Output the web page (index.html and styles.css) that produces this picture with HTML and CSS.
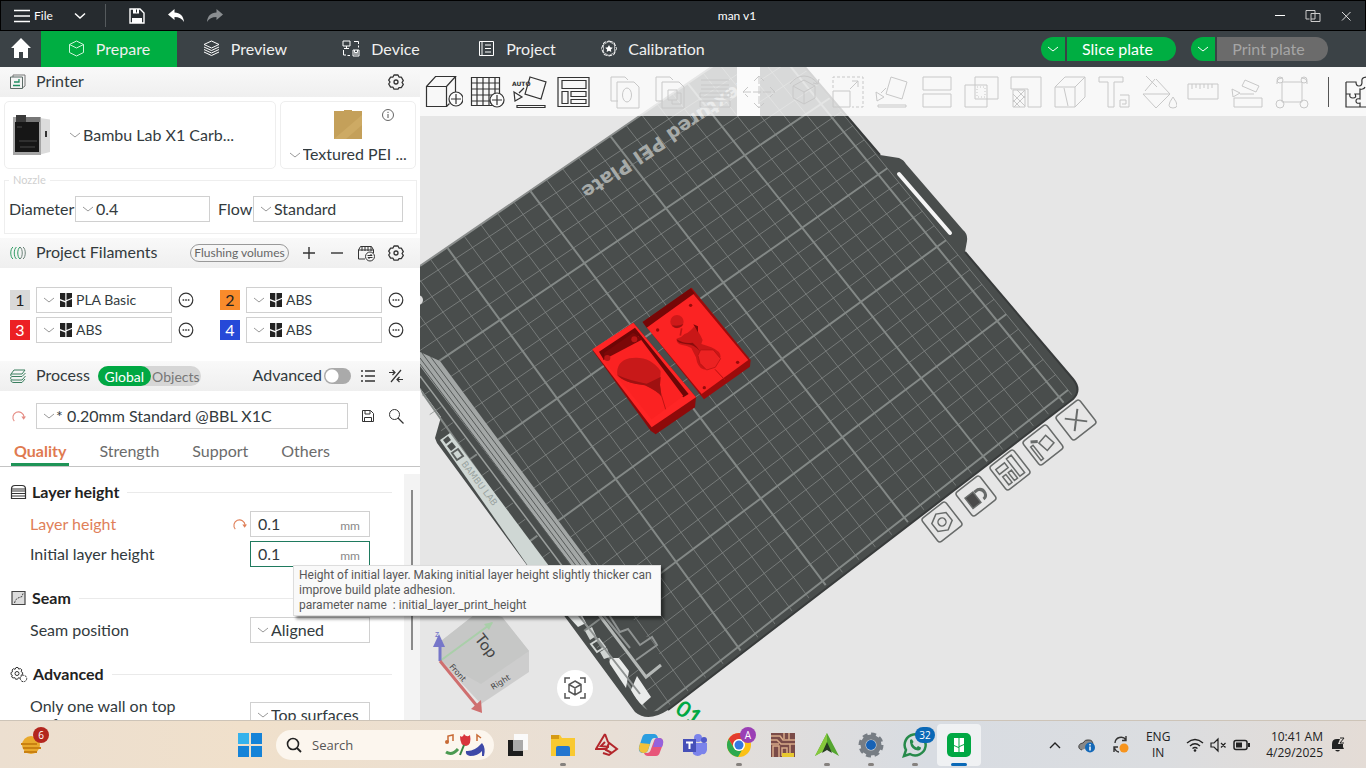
FILE: index.html
```html
<!DOCTYPE html>
<html lang="en">
  <head>
    <meta charset="UTF-8" />
    <meta name="viewport" content="width=device-width, initial-scale=1" />
    <title>man v1</title>
    <link rel="stylesheet" href="styles.css">
  </head>
  <body>
    <svg class="sprite" aria-hidden="true">
      <symbol id="chevron" viewBox="0 0 12 8"><path d="M1 2l5 4 5-4" fill="none" stroke="currentColor" /></symbol>
      <symbol id="more" viewBox="0 0 16 16"><circle cx="8" cy="8" r="6.8" fill="none" stroke="#333" stroke-width="1.2" /><path d="M4.6 8h1.6M7.2 8h1.6M9.8 8h1.6" stroke="#333" stroke-width="1.5" /></symbol>
      <symbol id="gear" viewBox="0 0 16 16"><path d="M6 1h4l1 2 2.400.2 1.900 3.400-1.300 1.900 1.300 1.900-1.900 3.100-2.400.1L10 15.200H6l-1-2-2.400-.1L.7 10 2 8 .7 6.100 2.600 3.100 5 3z" fill="none" stroke="#333" stroke-width="1.300" stroke-linejoin="round" /><circle cx="8" cy="8" r="2" fill="none" stroke="#333" stroke-width="1.300" /></symbol>
      <symbol id="brand" viewBox="0 0 12 14"><path d="M0 0h5.300v8L0 6zM6.500 0H12v4.800L6.500 7zM0 7.500l5.300 2V14H0zM6.500 8.300L12 6v8H6.500z" fill="#222" /></symbol>
      <symbol id="reset" viewBox="0 0 16 16"><path d="M3.500 13A6 6 0 1 1 14 8.500" fill="none" stroke="currentColor" stroke-width="1.200" /><path d="M11 8h5l-2.500 3.500z" fill="currentColor" /></symbol>
    </svg>

    <div class="app">
      <header class="titlebar">
        <button class="file-btn">
          <svg width="18" height="16"><path d="M1 2.500h16M1 8h16M1 13.500h16" stroke="#fff" stroke-width="1.500" /></svg>
          File
        </button>
        <button class="title-btn drop" aria-label="File menu"><svg width="14" height="10"><path d="M2 2.500l5 4.500 5-4.500" fill="none" stroke="#fff" stroke-width="1.500" /></svg></button>
        <span class="divider"></span>
        <button class="title-btn" aria-label="Save"><svg width="16" height="16"><path d="M1 1h10l4 4v10H1z" fill="none" stroke="#fff" stroke-width="1.400" /><path d="M4 1h6v4.500H4zM3 10h10v5H3z" fill="#fff" /><path d="M7.500 1.500v3" stroke="#262b2f" /></svg></button>
        <button class="title-btn" aria-label="Undo"><svg width="18" height="16"><path d="M1 6.500L7.500 1v3.500C13 4.500 16.500 8 17 14c-2-3.500-5-5-9.500-5v3z" fill="#fff" /></svg></button>
        <button class="title-btn" aria-label="Redo"><svg width="18" height="16"><path d="M17 6.500L10.500 1v3.500C5 4.500 1.500 8 1 14c2-3.500 5-5 9.500-5v3z" fill="#8a8e91" /></svg></button>
        <h1>man v1</h1>
        <div class="window-btns">
          <button class="title-btn" aria-label="Minimize"><svg width="16" height="16"><path d="M3 7.500h10" stroke="#fff" /></svg></button>
          <button class="title-btn" aria-label="Restore"><svg width="16" height="16"><path d="M4.500 11H1V2.500h9v3M6 5.500h9v8H6zM6 11h4V5.500" fill="none" stroke="#ccc" /></svg></button>
          <button class="title-btn" aria-label="Close"><svg width="16" height="16"><path d="M4 4l8.500 8.500M12.500 4L4 12.500" stroke="#ddd" /></svg></button>
        </div>
      </header>

      <nav class="nav">
        <a class="home" href="#" aria-label="Home"><svg width="20" height="20"><path d="M10 0l10 10h-3v10h-5v-6H8v6H3V10H0z" fill="#fff" /></svg></a>
        <a class="nav-tab active" href="#">
          <svg width="17" height="17"><path d="M8.500 1l7 3.500v8l-7 3.500-7-3.500v-8zM1.500 4.500l7 3.500 7-3.500" fill="none" stroke="#cdf5da" /></svg>
          Prepare</a>
        <a class="nav-tab" href="#">
          <svg width="17" height="17"><path d="M8.500 1L16 4.500 8.500 8 1 4.500zM1 7l7.500 3.500L16 7M1 9.500L8.500 13 16 9.500M1 12l7.500 3.500L16 12" fill="none" stroke="#fff" /></svg>
          Preview</a>
        <a class="nav-tab" href="#">
          <svg width="18" height="17"><path d="M1 1h7v5H1zM4.500 6v2M2 8.500h5M11 10h6v6h-6zM12.500 10v2.500h3V10M12 14h4M12 1.500h4.500V4M16.500 5.500v2M1.500 10v5H4M5.500 15.500h2.500" fill="none" stroke="#fff" /></svg>
          Device</a>
        <a class="nav-tab" href="#">
          <svg width="17" height="17"><path d="M1.500 1.500h14v14h-14zM4 1v15M7 5h6M7 8.500h6M7 12h6" fill="none" stroke="#fff" /></svg>
          Project</a>
        <a class="nav-tab" href="#">
          <svg width="16" height="17"><path d="M8 1l5 1.500L15.500 8.500 13 14.500 8 16l-5-1.500L.5 8.500 3 2.500z" fill="none" stroke="#fff" stroke-dasharray="4 1" /><path d="M8 1.500L13.500 4.500v8L8 15.500l-5.500-3v-8z" fill="none" stroke="#fff" stroke-width=".6" /><path d="M8 5l1.200 2.300 2.600.4-1.900 1.800.4 2.600L8 10.800l-2.300 1.300.4-2.600-1.900-1.800 2.600-.4z" fill="#fff" /></svg>
          Calibration</a>
        <div class="actions">
          <button class="pill-drop" aria-label="Slice options"><svg width="12" height="8"><use href="#chevron" /></svg></button>
          <button class="pill">Slice plate</button>
          <button class="pill-drop" aria-label="Print options"><svg width="12" height="8"><use href="#chevron" /></svg></button>
          <button class="pill disabled" disabled>Print plate</button>
        </div>
      </nav>

      <main class="main">
        <aside class="sidebar">
          <div class="head">
            <svg width="18" height="18"><path d="M4 4V2h12v11l-2 1.500" fill="none" stroke="#777" /><path d="M1.500 4h12v11.500h-12z" fill="none" stroke="#5b6b66" /><path d="M4 12.500h7M5 9h5V6" fill="none" stroke="#1f8f61" stroke-width="1.300" /></svg>
            <h2>Printer</h2>
            <button class="icon-btn push" aria-label="Printer settings"><svg width="16" height="16"><use href="#gear" /></svg></button>
          </div>

          <div class="cards">
            <div class="card printer-card">
              <svg width="42" height="42">
                <path d="M28 4l10 1.500V38l-10 2.500z" fill="#dcdcdc" /><path d="M1 3h28v38H1z" fill="#a5a5a5" />
                <path d="M3 8h24v30H3z" fill="#161616" /><path d="M4 1h10v7H4z" fill="#3a3a3a" /><path d="M14 3h14v5H14z" fill="#777" />
                <path d="M5 13h5M7 27h18M8 33h15" stroke="#484848" /><path d="M34 17v6" stroke="#333" stroke-width="2" />
              </svg>
              <label class="picker"><svg width="12" height="8"><use href="#chevron" /></svg>
                <select aria-label="Printer"><option>Bambu Lab X1 Carb...</option></select></label>
            </div>
            <div class="card plate-card">
              <svg class="plate-img" width="28" height="29"><path d="M0 1h10V0h8v1h10v28H0z" fill="#c4a05a" /><path d="M0 29L28 5v10L12 29z" fill="#cdaa64" /></svg>
              <svg class="info" width="14" height="14"><circle cx="7" cy="7" r="5.500" fill="none" stroke="#666" /><path d="M7 6v4M7 3.800v1.200" stroke="#555" /></svg>
              <label class="picker"><svg width="12" height="8"><use href="#chevron" /></svg>
                <select aria-label="Plate type"><option>Textured PEI ...</option></select></label>
            </div>
          </div>

          <fieldset class="nozzle">
            <legend>Nozzle</legend>
            <label for="diameter">Diameter</label>
            <div class="select"><svg width="12" height="8"><use href="#chevron" /></svg><select id="diameter"><option>0.4</option></select></div>
            <label for="flow">Flow</label>
            <div class="select flow"><svg width="12" height="8"><use href="#chevron" /></svg><select id="flow"><option>Standard</option></select></div>
          </fieldset>

          <div class="head">
            <svg width="18" height="18"><path d="M4 3c-3 2-3 10 0 12M7.500 3c-3 2-3 10 0 12M11 3c-3 2-3 10 0 12" fill="none" stroke="#2f9c63" /><path d="M11 3c3 2 3 10 0 12M14 3c3 2 3 10 0 12" fill="none" stroke="#6b8379" /></svg>
            <h2>Project Filaments</h2>
            <button class="flush push">Flushing volumes</button>
            <button class="icon-btn" aria-label="Add filament"><svg width="16" height="16"><path d="M8 2v12M2 8h12" stroke="#333" stroke-width="1.400" /></svg></button>
            <button class="icon-btn" aria-label="Remove filament"><svg width="16" height="16"><path d="M2 8h12" stroke="#333" stroke-width="1.400" /></svg></button>
            <button class="icon-btn wide" aria-label="Sync filaments"><svg width="19" height="17"><path d="M1.500 5l2-3.500h11l2 3.500v3M1.500 5v9H8M1.500 5h15M5 2v4M8 2v4M11 2v4M14 2v4" fill="none" stroke="#333" /><circle cx="13" cy="11.500" r="4.500" fill="#f3f3f3" stroke="#333" /><path d="M10.500 10.500h4.500l-1.500-1.500M15.500 12.500H11l1.500 1.500" fill="none" stroke="#333" /></svg></button>
            <button class="icon-btn" aria-label="Filament settings"><svg width="16" height="16"><use href="#gear" /></svg></button>
          </div>

          <div class="filaments">
            <div class="filament"><span class="swatch gray">1</span>
              <div class="select"><svg width="12" height="8"><use href="#chevron" /></svg><svg width="12" height="14"><use href="#brand" /></svg><select aria-label="Filament 1"><option>PLA Basic</option></select></div>
              <button class="icon-btn" aria-label="More"><svg width="16" height="16"><use href="#more" /></svg></button></div>
            <div class="filament"><span class="swatch orange">2</span>
              <div class="select"><svg width="12" height="8"><use href="#chevron" /></svg><svg width="12" height="14"><use href="#brand" /></svg><select aria-label="Filament 2"><option>ABS</option></select></div>
              <button class="icon-btn" aria-label="More"><svg width="16" height="16"><use href="#more" /></svg></button></div>
            <div class="filament"><span class="swatch red">3</span>
              <div class="select"><svg width="12" height="8"><use href="#chevron" /></svg><svg width="12" height="14"><use href="#brand" /></svg><select aria-label="Filament 3"><option>ABS</option></select></div>
              <button class="icon-btn" aria-label="More"><svg width="16" height="16"><use href="#more" /></svg></button></div>
            <div class="filament"><span class="swatch blue">4</span>
              <div class="select"><svg width="12" height="8"><use href="#chevron" /></svg><svg width="12" height="14"><use href="#brand" /></svg><select aria-label="Filament 4"><option>ABS</option></select></div>
              <button class="icon-btn" aria-label="More"><svg width="16" height="16"><use href="#more" /></svg></button></div>
          </div>

          <div class="head">
            <svg width="18" height="18"><path d="M5 3h11l-3 4H2zM2 7c-1 1 0 3 2 2.500h9L16.500 6M2 10c-1 2 0 3 2 3h9l3.500-4M2 13c0 2 1 2.500 3 2.500h8l3-3.500" fill="none" stroke="#3a7f5f" /></svg>
            <h2>Process</h2>
            <div class="scope"><button class="on">Global</button><button>Objects</button></div>
            <label class="adv push">Advanced<input type="checkbox" class="toggle" /></label>
            <button class="icon-btn" aria-label="Parameter list"><svg width="16" height="16"><path d="M1 3h2M5 3h10M1 8h2M5 8h10M1 13h2M5 13h10" stroke="#333" stroke-width="1.400" /></svg></button>
            <button class="icon-btn" aria-label="Compare presets"><svg width="16" height="16"><path d="M13 2L3 14M1 4.500h6M4.500 2L7 4.500 4.500 7M15 11.500H9M11.500 9L9 11.500l2.500 2.500" fill="none" stroke="#333" stroke-width="1.200" /></svg></button>
          </div>

          <div class="preset">
            <button class="icon-btn reset-btn" aria-label="Reset preset"><svg width="15" height="15"><use href="#reset" /></svg></button>
            <div class="select"><svg width="12" height="8"><use href="#chevron" /></svg><select aria-label="Process preset"><option>* 0.20mm Standard @BBL X1C</option></select></div>
            <button class="icon-btn" aria-label="Save preset"><svg width="14" height="14"><path d="M1.500 1.500h8l3 3v8h-11zM4 1.500V5h5V1.500M3.500 12.500v-4h7v4" fill="none" stroke="#333" /></svg></button>
            <button class="icon-btn" aria-label="Search settings"><svg width="16" height="16"><circle cx="6.500" cy="6.500" r="5" fill="none" stroke="#333" /><path d="M10 10l5.500 5.500" stroke="#333" stroke-width="1.200" /></svg></button>
          </div>

          <div class="tabs">
            <button class="tab current">Quality</button>
            <button class="tab">Strength</button>
            <button class="tab">Support</button>
            <button class="tab">Others</button>
          </div>

          <div class="params">
            <div class="params-list">
              <section>
                <h3><svg width="17" height="16"><path d="M1.500 5C1.500 2.500 3 1.500 5 1.500h7c2 0 3.500 1 3.500 3.500v2h-14zM1.500 7v7.500h14V7M1 9.500h15M1 12h15M1 5h15" fill="none" stroke="#333" stroke-width="1.200" /></svg><span>Layer height</span></h3>
                <div class="param changed">
                  <label for="layer">Layer height</label>
                  <svg class="reset" width="15" height="15"><use href="#reset" /></svg>
                  <div class="number"><input type="text" id="layer" value="0.1" /><span>mm</span></div>
                </div>
                <div class="param">
                  <label for="initial">Initial layer height</label>
                  <div class="number focus"><input type="text" id="initial" value="0.1" /><span>mm</span></div>
                </div>
              </section>
              <section>
                <h3><svg width="17" height="16"><path d="M2 1.500h13v13H2z" fill="#ddd" stroke="#444" stroke-width="1.200" /><path d="M4.500 13l1-3 2.500-2 4-1.500 1-3" fill="none" stroke="#444" stroke-dasharray="2 1" /></svg><span>Seam</span></h3>
                <div class="param">
                  <label for="seam">Seam position</label>
                  <div class="select"><svg width="12" height="8"><use href="#chevron" /></svg><select id="seam"><option>Aligned</option></select></div>
                </div>
              </section>
              <section>
                <h3><svg width="18" height="17"><path d="M6 1.500h2l.7 1.600 1.800-.5 1.300 1.300-.7 1.700 1.500.9v2l-1.600.8.500 1.700-1.300 1.300-1.700-.6-.9 1.500H5.500l-.7-1.600-1.800.4L1.700 11l.6-1.800L1 8.500v-2l1.600-.8-.5-1.700 1.300-1.300 1.700.6z" fill="none" stroke="#333" /><circle cx="7" cy="7.500" r="2" fill="none" stroke="#333" /><circle cx="13.500" cy="12.500" r="3.200" fill="#fff" stroke="#333" stroke-dasharray="2 .7" /></svg><span>Advanced</span></h3>
                <div class="param tall">
                  <label for="wall">Only one wall on top surfaces</label>
                  <div class="select"><svg width="12" height="8"><use href="#chevron" /></svg><select id="wall"><option>Top surfaces</option></select></div>
                </div>
              </section>
            </div>
            <div class="scroll"><div class="thumb"></div></div>
          </div>
        </aside>

        <div class="view">
          <svg class="scene" viewBox="420 67 946 653" preserveAspectRatio="xMinYMin slice">
            <defs>
              <clipPath id="sheet"><path d="M420 267L638 118 722 61H798L879 156 964 253 1071 380Q1079 389 1071 397L667 707Q652 716 642 706L437 440 420 388z" /></clipPath>
            </defs>
            <!-- plate body -->
            <path d="M420 266L638 117 722 60H799L880 155 899 158Q904 160 906 164L963 230Q968 234 967 241L965 252 1073 379Q1082 390 1073 399L668 710Q648 723 635 712L437 443 435 438 441 417 420 388z" fill="#494d4c" />
            <path d="M420 266L638 117 722 60" fill="none" stroke="#8a8d8c" stroke-width="2" />
            <path d="M799 60L880 155M965 252L1073 379Q1082 390 1073 399L668 710" fill="none" stroke="#383b3b" stroke-width="2" />
            <path d="M899 174L950 233" stroke="#f5f5f5" stroke-width="4" stroke-linecap="round" />
            <g clip-path="url(#sheet)">
              <path id="gridThin" class="grid-thin" />
              <path id="gridBold" class="grid-bold" />
            </g>
            <text class="plate-text" transform="translate(743 79) rotate(146)">Textured PEI Plate</text>

            <!-- left rim -->
            <path d="M420 352L440 361 592 566 640 628 664 660 646 680 560 566 420 378z" fill="#494d4c" />
            <path d="M420 352L440 361 592 566 572 566 420 366z" fill="#a3a7a6" />
            <path d="M420 358L577 567M422 353L582 567M430 356L588 567M420 364L572 567" stroke="#565a59" fill="none" />
            <path d="M420 376L563 567" stroke="#9a9e9c" stroke-width="1.500" fill="none" />
            <path d="M440 440L450 433 549 566 528 566z" fill="#cfd7d4" />
            <path d="M443 440l5-4 3 4-5 4zM447 446l5-4 4 5-5 4z" fill="#4b4f4e" />
            <path d="M452 453l6-4 5 7-6 4z" fill="none" stroke="#5c605f" stroke-width="2" />
            <text class="rim-text" transform="translate(461 464) rotate(53)">BAMBU LAB</text>
            <path d="M567 615h15l4 8-8 4z" fill="#e4e7e6" />
            <path d="M585 631l7-4 4 9-6 4zM600 652l7-4 3 9-6 2z" fill="#d0d4d2" />
            <path d="M591 644l8-5 6 8-8 5z" fill="none" stroke="#d0d4d2" stroke-width="2" />
            <path d="M610 664q-2-5 3-6l6 0q4 5 10 13l-3 17zM631 690l6-14 14 21-9 8q-5-4-11-15z" fill="#e9ebea" />
            <path d="M588 600L646 677 661 665" fill="none" stroke="#b4b8b6" stroke-width="3" />
            <path d="M596 606L630 648M606 610L620 632 628 629 640 645 652 637 657 645 636 660M573 608L640 694" fill="none" stroke="#8f9392" stroke-width="2" />
            <circle cx="418" cy="300" r="5" fill="#ddd" />
            <text class="plate-no" transform="translate(674 712) rotate(35)">01</text>

            <!-- models -->
            <g transform="translate(420 260) scale(.3333)">
              <path d="M668 186L815 83 992 300 990 320 852 418 842 406z" fill="#9c0b0b" />
              <path d="M680 202L818 100 985 300 845 402z" fill="#fb2323" />
              <path d="M668 186L812 85 824 100 680 203z" fill="#760707" />
              <path d="M785 205l-4 22" stroke="#c21515" stroke-width="5" />
              <circle cx="771" cy="185" r="20" fill="#cf1919" />
              <path d="M756 196a20 20 0 0 0 34-4q-14 8-34 4z" fill="#9c1010" />
              <path d="M770 236q16-4 24-14 16-6 28-22 14 12 26 40l-4 12q14 4 30 10 28 12 28 28l-18 24q-14 18-34 14-18-6-22-36l-14-28q-12-8-30-10-16-4-14-18z" fill="#c91717" />
              <path d="M842 270l38 0 22 26-16 26-26 8-20-20-6-24z" fill="#ec2222" stroke="#b01010" stroke-width="2" />
              <path d="M820 193l14 6 0 18z" fill="#7d0808" /><path d="M770 238q20 14 48 10 12 10 22 26-18-22-44-22-24-2-26-14z" fill="#8c0c0c" />
              <g fill="#9a0a0a"><circle cx="812" cy="136" r="5" /><circle cx="713" cy="210" r="5" /><circle cx="953" cy="307" r="5" /><circle cx="853" cy="383" r="5" /></g>
              <path d="M885 328l30 32" stroke="#b80f0f" stroke-width="3" />
              <path d="M517 270L640 188 828 412 825 442 707 523 692 512z" fill="#8e0a0a" />
              <path d="M517 268L640 188 828 412 695 502z" fill="#ff2525" />
              <path d="M537 275L645 203 806 402 790 412 553 302z" fill="#6d0606" />
              <path d="M550 300L655 228 790 408 695 478z" fill="#fb2222" />
              <path d="M550 300L553 278 640 218 668 238z" fill="#7b0808" />
              <circle cx="562" cy="294" r="9" fill="#b81515" /><circle cx="643" cy="238" r="9" fill="#b81515" />
              <path d="M592 345q-4-40 36-50 60-10 94 38l-2 42 5 35q-10-15-50-34-65-8-83-31z" fill="#c81919" />
              <path d="M592 345q40 18 88 26l42-20-2 24 5 35q-10-15-50-34-65-8-83-31z" fill="#9f1111" />
              <path d="M725 408l12 40" fill="none" stroke="#c01414" stroke-width="3" />
            </g>

            <!-- plate actions -->
            <g class="plate-btns">
              <g transform="translate(942 522) rotate(-38)"><rect x="-15" y="-15" width="30" height="30" rx="3" /><path d="M-9-5L0-10 9-5V5L0 10-9 5z" /><circle r="4" /></g>
              <g transform="translate(976 496) rotate(-38)"><rect x="-15" y="-15" width="30" height="30" rx="3" /><path class="solid" d="M-10-5H0V8H-10z" /><path class="lock" d="M1-4H5Q10-2 9 3 8 7 4 7" /></g>
              <g transform="translate(1010 470) rotate(-38)"><rect x="-15" y="-15" width="30" height="30" rx="3" /><path d="M-11-9H0V-3H-11zM4-11H10V11H4zM-10 1H-6V11H-10zM-3 1H1V11H-3z" /></g>
              <g transform="translate(1043 445) rotate(-38)"><rect x="-15" y="-15" width="30" height="30" rx="3" /><path d="M-2-4L8-6 10 5 0 7zM-11-6V11H-8V-6z" /><path class="lock" d="M-8-10l6 4" /></g>
              <g transform="translate(1076 420) rotate(-38)"><rect x="-15" y="-15" width="30" height="30" rx="3" /><path class="cross" d="M-8-8L8 8M8-8L-8 8" /></g>
            </g>

            <!-- view cube -->
            <path d="M440 642L478 612 502 617 529 651 529 672 481 704 441 661z" fill="#cdcdcd" />
            <path d="M440 661L441 641 478 612 502 617 529 651 481 684z" fill="#c6c7c6" />
            <path d="M440 661L492 623" stroke="#a9cfa9" stroke-width="2" /><path d="M484 624l9-2-4 8z" fill="#a9cfa9" />
            <path d="M440 661V640" stroke="#7676c9" stroke-width="3" /><path d="M433 647l6-13 6 13z" fill="#7676c9" />
            <path d="M440 661L477 706" stroke="#cf6f6f" stroke-width="3" /><path d="M471 709l11 4-1-13z" fill="#cf6f6f" />
            <text class="cube-text" transform="translate(474 639) rotate(52)">Top</text>
            <text class="cube-small" transform="translate(449 667) rotate(48)">Front</text>
            <text class="cube-small" transform="translate(493 690) rotate(-32)">Right</text>
            <text class="axis-z" x="435" y="637">z</text>
          </svg>

          <div class="toolbar">
            <div class="tools">
              <button aria-label="Add model"><svg width="38" height="36"><path d="M1.500 12.500h20v20h-20zM1.500 12.500l9-10h20l-9 10M30.500 2.500V18M21.500 32.500l3-3" /><circle cx="31" cy="25" r="7" fill="#fcfcfc" /><path d="M31 20v10M26 25h10" /></svg></button>
              <button aria-label="Add plate"><svg width="38" height="36"><path d="M3.500 3.500h28v28h-28zM9 3v29M15 3v29M21 3v29M27 3v29M3 9h29M3 15h29M3 21h29M3 27h29" /><circle cx="29" cy="26" r="7" fill="#fcfcfc" /><path d="M29 21v10M24 26h10" /></svg></button>
              <button aria-label="Auto orient"><svg width="38" height="36"><path d="M19 3l16 5-5 17-16-5zM6 31.500h28v2H6zM3 18l8 5-7 4zM8 19l5-5" /><text x="1" y="12">AUTO</text></svg></button>
              <button aria-label="Arrange"><svg width="38" height="36"><path d="M4 3.500h31v29H4zM8 6.500h24v8H8zM8 17.500h6v12H8zM17 17.500h15v5H17zM17 25.500h15v4H17z" /></svg></button>
            </div>
            <div class="tools dim">
              <button aria-label="Split to objects"><svg width="36" height="36"><path d="M10 27H3V3h14l3 3M9 8h17l5 5v21H9z" /><ellipse cx="19" cy="21" rx="4.500" ry="7" /></svg></button>
              <button aria-label="Split to parts"><svg width="36" height="36"><path d="M10 27H3V3h14l3 3M9 8h17l5 5v21H9zM15 16h9v10h-9zM19 26v4h9V19h-4" /></svg></button>
              <button aria-label="Variable layer height"><svg width="36" height="36"><path d="M4 6h28M4 11h28M4 15h28M3 19h30v4H3zM3 27h30v6H3z" /></svg></button>
              <button class="lit" aria-label="Move"><svg width="36" height="36"><path d="M18 2v32M2 18h32M13 7l5-5 5 5M13 29l5 5 5-5M7 13l-5 5 5 5M29 13l5 5-5 5" stroke-dasharray="8 2" /></svg></button>
              <button aria-label="Rotate"><svg width="36" height="36"><path d="M7 12L18 6l11 6v12l-11 6-11-6zM7 12l11 6 11-6M18 18v12M4 10Q10 2 18 2t14 8l-5-1M32 10l1-5" /></svg></button>
              <button aria-label="Scale"><svg width="36" height="36"><path d="M3 17h17v16H3z" /><path d="M3 14V3h30v30H22" stroke-dasharray="3 2" /><path d="M20 15l8-8M22 7h6v6" /></svg></button>
              <button aria-label="Lay on face"><svg width="36" height="36"><path d="M17 3l16 5-5 17-16-5zM4 31h28v2H4zM2 18l8 5-7 4zM7 19l5-5" /></svg></button>
              <button aria-label="Cut"><svg width="36" height="36"><path d="M4 3h28v13H4zM4 20h28v13H4z" /></svg></button>
              <button aria-label="Mesh boolean"><svg width="36" height="36"><path d="M12 3h23v22H12zM2 11h22v22H2z" /><path d="M14 13h8v10h-8z" stroke-dasharray="1 2" /></svg></button>
              <button aria-label="Support painting"><svg width="36" height="36"><path d="M3 3h30v30H20V15H3z" /><path d="M5 16h12v17H5zM5 20l12 12M5 26l7 7M9 16l8 8M17 16L5 28M17 22L6 33" /></svg></button>
              <button aria-label="Seam painting"><svg width="36" height="36"><path d="M3 13h20v20H3zM3 13L13 3h20L23 13M33 3v20L23 33M12 14l4 18" /></svg></button>
              <button aria-label="Text"><svg width="36" height="36"><path d="M3 3h24v5h-9v25h-6V8H3z" /><path d="M24 21h9v12h-9v-7h6v4h-4" /></svg></button>
              <button aria-label="Color painting"><svg width="36" height="36"><path d="M15 5l14 15-14 14L2 20h26M14 5L4 17M5 2l11 11M32 23q-8 11 0 11t0-11z" /></svg></button>
              <button aria-label="Measure"><svg width="36" height="36"><path d="M3 10h30v15H3zM7 10v5M11 10v4M15 10v5M19 10v4M23 10v5M27 10v4" /></svg></button>
              <button aria-label="Assembly"><svg width="36" height="36"><path d="M5 24h28v9H5zM16 6l14 6-3 6-14-6zM3 15l8 4-7 4zM11 20h14" /></svg></button>
              <button aria-label="Assembly view"><svg width="36" height="36"><path d="M8 8h20v20H8zM3 10q-1-6 6-6M33 10q1-6-6-6" /><circle cx="6" cy="30" r="4" /><circle cx="30" cy="30" r="4" /><circle cx="6" cy="6" r="3" /><circle cx="30" cy="6" r="3" /></svg></button>
            </div>
            <span class="sep"></span>
            <button class="puzzle" aria-label="Assemble"><svg width="36" height="36"><path d="M3 8h10q0 4 3 4t3-4q-1-5 5-5M3 20h4q-1 4 3 4t2-4h5v-5q4 1 5-2M17 20v5q-4-1-4 2t4 2v4H3V8M17 33h8" /></svg></button>
          </div>
          <button class="fit" aria-label="Fit view"><svg width="24" height="24"><path d="M2 7V2h5M17 2h5v5M22 17v5h-5M7 22H2v-5" /><path d="M12 5l6 3.500v7L12 19l-6-3.500v-7zM6 8.500l6 3.500 6-3.500M12 12v7" /></svg></button>
        </div>
        <div class="tooltip" role="tooltip">Height of initial layer. Making initial layer height slightly thicker can improve build plate adhesion.<br>parameter name &nbsp;: initial_layer_print_height</div>
      </main>

      <footer class="taskbar">
        <button class="task weather" aria-label="Widgets">
          <svg width="26" height="26"><circle cx="12" cy="13" r="9" fill="#e9a92c" /><path d="M2 12h16M4 16h18M5 20h13" stroke="#c98112" stroke-width="2" /></svg>
          <span class="badge red">6</span>
        </button>
        <button class="task" aria-label="Start"><svg width="24" height="24"><path d="M0 0h11v11H0zM13 0h11v11H13zM0 13h11v11H0zM13 13h11v11H13z" fill="#1583d8" /><path d="M0 0h11v11H0z" fill="#35b2ec" /></svg></button>
        <label class="search">
          <svg width="16" height="16"><circle cx="7" cy="7" r="5.500" fill="none" stroke="#222" stroke-width="1.600" /><path d="M11 11l4 4" stroke="#222" stroke-width="1.800" /></svg>
          <input type="search" placeholder="Search" aria-label="Search" />
          <svg width="42" height="24"><path d="M4 9V3l5-1v6" fill="none" stroke="#c76a35" stroke-width="1.500" /><circle cx="3" cy="9" r="2" fill="#c76a35" /><path d="M2 19q6 4 12-3" fill="none" stroke="#4b9a51" stroke-width="3" /><path d="M16 3q3 2 4-2 3 4 6 1 2 10-4 11-6 0-6-10z" fill="#d8343c" /><path d="M20 12l-4 10" stroke="#368241" stroke-width="2" /><path d="M38 10q4 5 2 13h-2v-5q-4 5-12 5-5-1-4-5 8 1 16-8z" fill="#3e49a8" /><path d="M33 8V2l4 3" fill="none" stroke="#c76a35" stroke-width="1.500" /></svg>
        </label>
        <div class="tasks">
          <button class="task" aria-label="Task view"><svg width="24" height="24"><path d="M7 1h14v16H7z" fill="#fafafa" /><path d="M1 7h5v11h10v5H1z" fill="#1d1d1d" /><path d="M6 7h10v11H6z" fill="#aaa" /></svg></button>
          <button class="task running" aria-label="File Explorer"><svg width="26" height="24"><path d="M1 2h9l2 3h13v18H1z" fill="#f9c931" /><path d="M1 2h8v4H1z" fill="#d69a13" /><path d="M6 15q0-2 2-2h10q2 0 2 2v8H6z" fill="#2476cf" /></svg></button>
          <button class="task" aria-label="CAD"><svg width="24" height="24"><path d="M10 1L1 16h11M10 1l3 8M10 9l-4 4 8 1M13 9l9 7-8 6-6-2M14 10l-3 7 6 3" fill="none" stroke="#b3262b" stroke-width="2" /></svg></button>
          <button class="task" aria-label="Copilot"><svg width="26" height="24"><path d="M8 1h8q3 0 4 4h-4q-2 0-3 3l-3 9q-1 3-4 3H4Q0 19 1 14L4 5Q5 1 8 1z" fill="#2b9ee0" /><path d="M2 10L1 15q0 5 5 5 3 0 4-3l2-6z" fill="#f2c13b" /><path d="M18 23h-8q-3 0-4-3h3q3 0 4-4l3-8q1-3 4-3h2q4 1 3 6l-3 8q-1 4-4 4z" fill="#e8567a" /><path d="M17 6q1-1 3-1h2q4 1 3 6l-1 3h-9z" fill="#9562dc" /></svg></button>
          <button class="task" aria-label="Teams"><svg width="26" height="24"><circle cx="16" cy="5" r="4" fill="#7b83eb" /><circle cx="22" cy="7" r="3" fill="#5059c9" /><path d="M10 10h15v7q-1 5-5 4-4 4-9 0z" fill="#7b83eb" /><path d="M1 6h13v13H1z" fill="#4650b8" /><path d="M4 9.500h7M7.500 9.500V16" stroke="#fff" stroke-width="2" /></svg></button>
          <button class="task running" aria-label="Chrome"><svg width="26" height="26"><circle cx="13" cy="13" r="12" fill="#fbc116" /><path d="M2.600 7A12 12 0 0 1 23.400 7H13a6 6 0 0 0-5.500 8z" fill="#e33b2e" /><path d="M2.600 7L8 16a6 6 0 0 0 8 2l-4 7A12 12 0 0 1 2.600 7z" fill="#2da94f" /><circle cx="13" cy="13" r="6" fill="#fff" /><circle cx="13" cy="13" r="4.500" fill="#3478e0" /></svg><span class="badge purple">A</span></button>
          <button class="task" aria-label="Circuit"><svg width="26" height="26"><path d="M1 1h24v24H1z" fill="#7a4b48" /><path d="M1 4h9l3 4h12M1 8h6l4 4h14M3 25V14h6v11M12 24v-8h5v8M20 25V12M1 12h8M14 1v6M19 1v7" fill="none" stroke="#d8aa88" stroke-width="1.500" /><path d="M12 21h12v4H12z" fill="#e7c830" /></svg></button>
          <button class="task running" aria-label="Slicer"><svg width="26" height="26"><path d="M13 1l12 23-12-7-12 7z" fill="#55a630" /><path d="M13 1v16L1 24z" fill="#86c93c" /><path d="M13 10l5 11-5-3-5 3z" fill="#263b22" /></svg></button>
          <button class="task running" aria-label="Settings"><svg width="26" height="26"><circle cx="13" cy="13" r="8" fill="none" stroke="#777d84" stroke-width="5" /><circle cx="13" cy="13" r="11" fill="none" stroke="#777d84" stroke-width="3" stroke-dasharray="5 3.600" /><circle cx="13" cy="13" r="5" fill="#1762b5" /></svg></button>
          <button class="task running" aria-label="WhatsApp"><svg width="26" height="26"><path d="M2 24l2-6A10.500 10.500 0 1 1 8 22z" fill="none" stroke="#278a4b" stroke-width="2.500" /><path d="M8 8q2-2 3 1l.5 1-1 1.500q1.500 3 4 4l1.500-1.500 3 1.500q0 3-3 3-7-1-8-8z" fill="#278a4b" /></svg><span class="badge sky">32</span></button>
          <button class="task open" aria-label="Bambu Studio"><svg width="24" height="24"><rect width="24" height="24" rx="5" fill="#00a843" /><path d="M7 5h4.500v9L7 12zM12.500 5H17v6l-4.500 2zM7 13l4.500 2v4H7zM12.500 14l4.500-2v7h-4.500z" fill="#fff" /></svg></button>
        </div>
        <div class="tray">
          <button aria-label="Hidden icons"><svg width="14" height="12"><path d="M2 9l5-5 5 5" fill="none" stroke="#222" stroke-width="1.400" /></svg></button>
          <button aria-label="OneDrive"><svg width="18" height="16"><path d="M4 13q-4-1-3-4.500Q2 6 5 6q2-4 6-3 4 0 4 5" fill="#888" stroke="#444" /><circle cx="12" cy="10.500" r="5" fill="#1469b8" /><path d="M12 9.500v4M12 7v1.500" stroke="#fff" stroke-width="1.500" /></svg></button>
          <button aria-label="Updates"><svg width="18" height="18"><path d="M3 7a6 6 0 0 1 11-3M14 0v4.500h-4M2 16v-5h4M2 11q2 5 5 5" fill="none" stroke="#333" stroke-width="1.400" /><circle cx="12" cy="12" r="4.500" fill="#f7941d" /></svg></button>
          <button class="lang">ENG<br>IN</button>
          <button aria-label="Network"><svg width="18" height="16"><path d="M1 6q8-7 16 0M4 9q5-4.500 10 0M6.500 11.500q2.500-2 5 0" fill="none" stroke="#222" stroke-width="1.400" /><circle cx="9" cy="13.500" r="1.300" fill="#222" /></svg></button>
          <button aria-label="Volume"><svg width="17" height="16"><path d="M1 6h3l4-4v12L4 10H1zM11 6l4.500 4.500M15.500 6L11 10.500" fill="none" stroke="#222" stroke-width="1.200" /></svg></button>
          <button aria-label="Battery"><svg width="18" height="12"><rect x="1" y="1.500" width="13" height="9" rx="2" fill="none" stroke="#222" stroke-width="1.500" /><path d="M3 3.500h6v5H3z" fill="#222" /><path d="M16 4v4" stroke="#222" stroke-width="2" /></svg></button>
          <button class="clock">10:41 AM<br>4/29/2025</button>
          <button aria-label="Notifications"><svg width="16" height="16"><path d="M2 12V7q0-5 5-5h3l-2 5h5v3l1 2zM5 13h5q-2 3-5 0z" fill="#222" /><path d="M10 1h4l-4 5h4" fill="none" stroke="#222" /></svg></button>
        </div>
      </footer>
    </div>
    <script src="scene.js"></script>
  </body>
</html>
```

FILE: styles.css
```css
* {
  box-sizing: border-box;
}
body {
  margin: 0;
  font-family: Lato, "Liberation Sans", sans-serif;
  font-size: 16px;
  color: #323a3d;
  overflow: hidden;
}
button,
input,
select {
  font: inherit;
  color: inherit;
  border: none;
  background: none;
  padding: 0;
  margin: 0;
}
button {
  cursor: pointer;
}
svg {
  flex: none;
  display: block;
}
.sprite {
  position: absolute;
  width: 0;
  height: 0;
}
.app {
  display: flex;
  flex-direction: column;
  height: 100vh;
}

/* title bar */
.titlebar {
  display: flex;
  align-items: center;
  height: 31px;
  padding: 0 3px 0 12px;
  background-color: #262b2f;
  border: 1px solid #000;
  color: #fff;
  position: relative;
}
.file-btn {
  display: flex;
  align-items: center;
  gap: 3px;
  font-size: 12px;
}
.title-btn {
  display: flex;
  align-items: center;
  justify-content: center;
  width: 39px;
  height: 28px;
}
.title-btn.drop {
  margin-left: 8px;
}
.divider {
  width: 1px;
  height: 23px;
  background-color: #555a5d;
  margin: 0 12px 0 5px;
}
.titlebar h1 {
  position: absolute;
  left: 108px;
  right: 0;
  text-align: center;
  margin: 0;
  font-size: 12px;
  font-weight: normal;
  pointer-events: none;
}
.window-btns {
  display: flex;
  margin-left: auto;
}
.window-btns .title-btn {
  width: 33px;
}

/* main navigation */
.nav {
  display: flex;
  height: 36px;
  background-color: #3b4246;
  color: #fff;
}
.nav a {
  display: flex;
  align-items: center;
  justify-content: center;
  gap: 11px;
  padding-bottom: 2px;
  color: #f0f0f0;
  text-decoration: none;
}
.home {
  width: 41px;
}
.nav-tab {
  width: 136px;
}
.nav-tab.active {
  background-color: #00ae42;
}
.actions {
  display: flex;
  align-items: center;
  margin-left: auto;
  padding-right: 38px;
}
.pill-drop,
.pill {
  height: 24px;
  background-color: #00ae42;
  color: #fff;
}
.pill-drop {
  display: flex;
  align-items: center;
  justify-content: center;
  width: 24px;
  border-radius: 12px 0 0 12px;
  margin-right: 2px;
}
.pill {
  width: 109px;
  padding: 0 8px 2px 0;
  border-radius: 0 12px 12px 0;
  margin-right: 15px;
}
.pill.disabled {
  width: 111px;
  margin-right: 0;
  background-color: #6b6b6b;
  color: #a5a5a5;
}

.main {
  display: flex;
  flex: 1;
  min-height: 0;
  position: relative;
}

/* sidebar */
.sidebar {
  display: flex;
  flex-direction: column;
  width: 420px;
  background-color: #fff;
  overflow: hidden;
}
.head {
  display: flex;
  align-items: center;
  flex: none;
  height: 30px;
  padding: 0 16px 0 9px;
  background: linear-gradient(#f9f9f9, #efefef);
}
.head h2 {
  margin: 0 0 0 9px;
  padding-bottom: 3px;
  font-size: 16px;
  font-weight: normal;
}
.push {
  margin-left: auto;
}
.icon-btn {
  display: flex;
  align-items: center;
  justify-content: center;
  flex: none;
  width: 16px;
}
.cards {
  display: flex;
  gap: 4px;
  padding: 4px;
}
.card {
  height: 68px;
  border: 1px solid #eee;
  border-radius: 5px;
  display: flex;
  align-items: center;
}
.printer-card {
  flex: 1;
  padding-left: 7px;
  gap: 15px;
}
.plate-card {
  position: relative;
  width: 136px;
  flex-direction: column;
  padding: 8px 8px 3px;
  justify-content: space-between;
}
.info {
  position: absolute;
  top: 6px;
  right: 20px;
}
.picker,
.select {
  display: flex;
  align-items: center;
  color: #333b3e;
}
.picker svg,
.select svg:first-child {
  color: #999;
}
.picker {
  gap: 2px;
}
select {
  appearance: none;
  flex: 1;
  min-width: 0;
  padding-bottom: 2px;
  outline: none;
}
.select {
  height: 26px;
  border: 1px solid #d0d0d0;
  padding-left: 6px;
  gap: 2px;
  background-color: #fff;
}
.nozzle {
  display: flex;
  align-items: center;
  height: 61px;
  margin: 0 4px 4px;
  padding: 9px 13px 0 4px;
  border: 1px solid #eee;
}
.nozzle legend {
  font-size: 11px;
  line-height: 14px;
  color: #d0d0d0;
  padding: 0 4px;
}
.nozzle label {
  width: 66px;
  padding-bottom: 2px;
}
.nozzle label[for="flow"] {
  width: 43px;
  padding-left: 8px;
}
.nozzle .select {
  width: 135px;
}
.nozzle .flow {
  width: 150px;
}
.flush {
  width: 99px;
  height: 18px;
  border: 1px solid #999;
  border-radius: 9px;
  font-size: 12px;
  line-height: 14px;
  color: #666;
  margin-right: 12px;
}
.flush ~ .icon-btn {
  margin-left: 12px;
}
.flush + .icon-btn {
  margin-left: 0;
}
.flush ~ .icon-btn.wide {
  width: 19px;
}
.filaments {
  display: grid;
  grid-template-columns: 1fr 1fr;
  row-gap: 4px;
  padding: 19px 0 18px;
}
.filament {
  display: flex;
  align-items: center;
  padding-left: 10px;
}
.filament .select {
  width: 136px;
  margin: 0 6px;
  font-size: 14px;
}
.filament .select svg + svg {
  margin: 0 2px 0 3px;
}
.swatch {
  width: 20px;
  height: 20px;
  line-height: 19px;
  text-align: center;
  color: #222;
}
.swatch.gray {
  background-color: #d9d9d9;
}
.swatch.orange {
  background-color: #f98b2b;
}
.swatch.red {
  background-color: #ec2024;
  color: #fff;
}
.swatch.blue {
  background-color: #2649d8;
  color: #fff;
}
.scope {
  display: flex;
  height: 20px;
  margin-left: 8px;
  border-radius: 10px;
  background-color: #d6d6d6;
  font-size: 14px;
  line-height: 19px;
}
.scope button {
  width: 50px;
  color: #777;
}
.scope .on {
  width: 53px;
  border-radius: 10px;
  background-color: #00a843;
  color: #fff;
}
.adv {
  display: flex;
  align-items: center;
  gap: 2px;
  line-height: 16px;
  padding-bottom: 2px;
}
.adv ~ .icon-btn {
  margin-left: 12px;
}
.adv + .icon-btn {
  margin-left: 9px;
}
.toggle {
  appearance: none;
  width: 27px;
  height: 16px;
  margin-top: 2px;
  border-radius: 8px;
  background: radial-gradient(circle at 8px 8px, #fff 6px, #aaa 7px);
}
.preset {
  display: flex;
  align-items: center;
  gap: 12px;
  padding: 12px 16px 8px 10px;
}
.preset .select {
  flex: 1;
  gap: 1px;
  margin-left: -2px;
}
.reset-btn {
  color: #e58c84;
}
.tabs {
  display: flex;
  flex: none;
  height: 30px;
  border-bottom: 1px solid #c4c4c4;
  padding-left: 11px;
  gap: 27px;
}
.tab {
  color: #6b6b6b;
  padding: 0 3px;
  border-bottom: 3px solid transparent;
}
.tab.current {
  color: #e07a50;
  font-weight: bold;
  border-bottom-color: #1f9457;
}
.params {
  display: flex;
  flex: 1;
  min-height: 0;
}
.params-list {
  flex: 1;
  padding: 13px 12px 0 10px;
}
.params section {
  padding-bottom: 17px;
}
.params h3 {
  display: flex;
  align-items: center;
  gap: 5px;
  height: 24px;
  margin: 0 0 5px;
  font-size: 16px;
  color: #222;
}
.params h3 span {
  padding-bottom: 2px;
}
.params h3::after {
  content: "";
  flex: 1;
  height: 1px;
  margin-left: 3px;
  background-color: #eaeaea;
}
.param {
  display: flex;
  align-items: center;
  height: 30px;
  padding: 0 22px 0 20px;
}
.param label {
  width: 150px;
  margin-right: auto;
  line-height: 18px;
  padding-bottom: 1px;
}
.param .select,
.number {
  width: 120px;
}
.param.changed,
.param .reset {
  color: #e08059;
}
.reset {
  margin-right: 3px;
}
.param.tall {
  height: 48px;
}
.number {
  display: flex;
  align-items: center;
  height: 26px;
  border: 1px solid #d0d0d0;
  padding: 0 9px 2px 7px;
  color: #323a3d;
}
.number.focus {
  border-color: #1f7a5e;
}
.number input {
  flex: 1;
  min-width: 0;
  outline: none;
}
.number span {
  font-size: 12px;
  color: #888;
  padding-top: 4px;
}
.scroll {
  width: 16px;
  margin-top: 7px;
  padding: 16px 7px 0;
  background-color: #f3f3f3;
}
.thumb {
  height: 160px;
  width: 2px;
  background-color: #8a8a8a;
}

/* 3D view */
.view {
  position: relative;
  flex: 1;
  min-width: 0;
  background-color: #e6e6e6;
  overflow: hidden;
}
.scene {
  position: absolute;
  inset: 0;
  width: 100%;
  height: 100%;
}
.grid-thin {
  fill: none;
  stroke: #858a88;
  stroke-width: 1;
  opacity: 0.75;
}
.grid-bold {
  fill: none;
  stroke: #838886;
  stroke-width: 2;
}
.plate-text {
  font: bold 19px "DejaVu Sans", sans-serif;
  fill: #a6aaa8;
}
.rim-text {
  font: 9px "DejaVu Sans", sans-serif;
  fill: #9aa3a0;
}
.plate-no {
  font: bold 22px Lato, sans-serif;
  fill: #00a843;
}
.plate-btns {
  fill: none;
  stroke: #686b6a;
  stroke-width: 1.5;
}
.plate-btns .solid {
  fill: #4a4a4a;
}
.plate-btns .lock {
  stroke-width: 3;
}
.plate-btns .cross {
  stroke-width: 2;
}
.cube-text {
  font: 16px Lato, sans-serif;
  fill: #444;
}
.cube-small {
  font: 8px "DejaVu Sans", sans-serif;
  fill: #444;
}
.axis-z {
  font: 9px Lato, sans-serif;
  fill: #7676c9;
}
.toolbar {
  position: relative;
  display: flex;
  align-items: center;
  height: 49px;
  padding-left: 2px;
  background-color: rgba(253, 253, 253, 0.8);
}
.toolbar svg {
  fill: none;
  stroke: #333;
  stroke-width: 1.2;
}
.toolbar text {
  font: bold 6px "DejaVu Sans", sans-serif;
  fill: #333;
  stroke: none;
}
.tools {
  display: flex;
}
.tools button {
  display: flex;
  align-items: center;
  justify-content: center;
  width: 43px;
  height: 49px;
}
.tools.dim {
  flex: 1;
  margin-left: 10px;
}
.tools.dim button {
  width: auto;
  flex: 1;
}
.tools.dim .lit {
  background: linear-gradient(90deg, #fbfbfb 50%, transparent 50%);
}
.tools.dim svg {
  stroke: #c8c8c8;
  stroke-width: 1;
}
.sep {
  width: 1px;
  height: 30px;
  margin: 0 14px;
  background-color: #555;
}
.puzzle {
  width: 23px;
  overflow: hidden;
}
.fit {
  position: absolute;
  left: 137px;
  bottom: 14px;
  display: flex;
  align-items: center;
  justify-content: center;
  width: 36px;
  height: 36px;
  border-radius: 50%;
  background-color: #fff;
}
.fit svg {
  fill: none;
  stroke: #555;
  stroke-width: 1.5;
}
.tooltip {
  position: absolute;
  left: 293px;
  top: 498px;
  width: 368px;
  padding: 2px 5px;
  background-color: #f9f9f9;
  border: 1px solid #ddd;
  box-shadow: 3px 3px 3px rgba(0, 0, 0, 0.45);
  font-family: Roboto, "Open Sans", sans-serif;
  font-size: 12px;
  line-height: 15px;
  color: #575757;
}

/* taskbar */
.taskbar {
  display: flex;
  align-items: center;
  height: 48px;
  border-top: 1px solid #cdc4b8;
  background: linear-gradient(90deg, #ecdfd0, #f0e0cb 18%, #e8dfd6 45%, #d8dce2 68%, #dbdde0 85%, #e4dcd6);
  font-family: "Open Sans", "Noto Sans", sans-serif;
  font-size: 12px;
  color: #222;
}
.task {
  position: relative;
  display: flex;
  align-items: center;
  justify-content: center;
  width: 44px;
  height: 42px;
}
.weather {
  margin: 0 174px 0 10px;
}
.badge {
  position: absolute;
  top: 3px;
  right: 5px;
  min-width: 16px;
  height: 16px;
  line-height: 16px;
  border-radius: 8px;
  font-size: 10px;
  color: #fff;
  text-align: center;
}
.badge.red {
  background-color: #b3261e;
}
.badge.purple {
  background-color: #9a3fb5;
}
.badge.sky {
  background-color: #0b69b7;
  min-width: 20px;
  right: 2px;
}
.search {
  display: flex;
  align-items: center;
  gap: 10px;
  width: 218px;
  height: 30px;
  margin: 0 3px 0 4px;
  padding: 0 8px 0 10px;
  border-radius: 15px;
  background-color: #fcf6ee;
}
.search input {
  flex: 1;
  min-width: 0;
  font-size: 13px;
}
.search input::placeholder {
  color: #555;
}
.tasks {
  display: flex;
}
.running::after,
.open::after {
  content: "";
  position: absolute;
  bottom: 0;
  width: 6px;
  height: 3px;
  border-radius: 2px;
  background-color: #85817e;
}
.open {
  background-color: rgba(255, 255, 255, 0.6);
  border-radius: 4px;
}
.open::after {
  width: 16px;
  background-color: #0b69b7;
}
.tray {
  display: flex;
  align-items: center;
  margin-left: auto;
  padding-right: 20px;
  gap: 6px;
}
.tray button:first-child,
.tray button:first-child + button {
  margin-right: 10px;
}
.lang {
  width: 36px;
  line-height: 16px;
  margin: 0 4px;
}
.clock {
  line-height: 16px;
  text-align: right;
  margin: 0 1px 0 9px;
}
```

FILE: scene.js
```js
// Projects plate millimetres onto the view
function project(x, y) {
  const u = (x - 50) / 200;
  const v = (y - 50) / 200;
  const w = 1 + 0.0711 * u - 0.0527 * v;
  return [
    ((379.4 * u + 199.1 * v + 500) / w).toFixed(1),
    ((-208.6 * u + 292.9 * v + 320) / w).toFixed(1),
  ].join(" ");
}

function line(x1, y1, x2, y2) {
  return "M" + project(x1, y1) + "L" + project(x2, y2);
}

let thin = line(256, -5, 256, 253);
let bold = "";
for (let mm = 0; mm <= 250; mm += 10) {
  let pair = line(mm, -10, mm, 254);
  if (mm > 0) {
    pair += line(-3, mm, 256, mm);
  }
  if (mm % 50 === 0) {
    bold += pair;
  } else {
    thin += pair;
  }
}
document.getElementById("gridThin").setAttribute("d", thin);
document.getElementById("gridBold").setAttribute("d", bold);
```
